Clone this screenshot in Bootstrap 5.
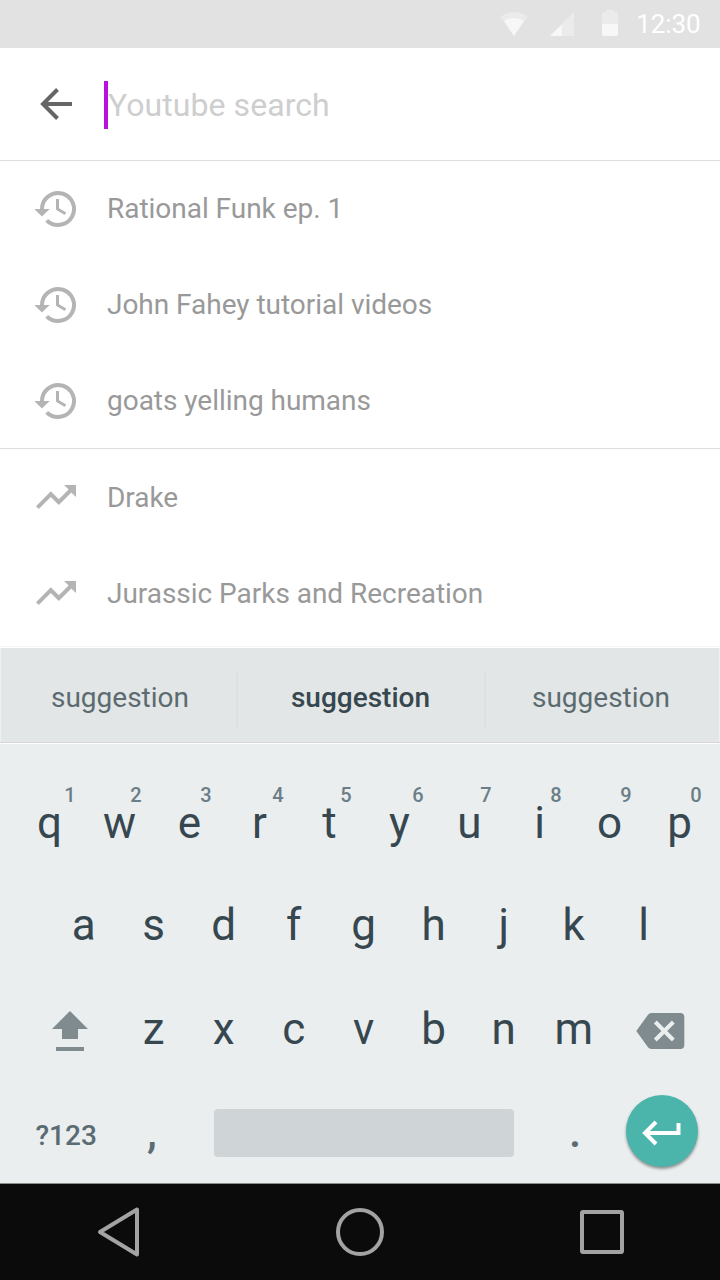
<!DOCTYPE html>
<html lang="en">
<head>
<meta charset="utf-8">
<meta name="viewport" content="width=device-width, initial-scale=1">
<title>Youtube search</title>
<link href="https://cdn.jsdelivr.net/npm/bootstrap@5.3.0/dist/css/bootstrap.min.css" rel="stylesheet">
<style>
body{font-family:Roboto,"Noto Sans",sans-serif;width:720px;height:1280px;overflow:hidden;background:#fff}
svg{display:block;flex:none}
.status{height:48px;background:#e2e2e2;color:#fff;font-size:26px;letter-spacing:-.1px;line-height:48px;padding-right:19.500px}
.search{height:113px;border-bottom:1px solid #dedede;padding-left:32px}
.caret{width:4px;height:48px;background:#b90fe0;margin-left:24px;margin-top:2px}
.query{border:0;outline:0;padding:0;width:500px;height:48px;font-size:32px;letter-spacing:.06px;background:none;margin-top:1px}
.query::placeholder{color:#cecece;opacity:1}
.hit{height:96px;flex:none;padding:0 0 0 32px;font-size:28px;letter-spacing:-.03px;color:#999;border:0;gap:27px;background:none}
.hit svg{fill:#b4b4b4}
.hits{height:288px;border-bottom:1px solid #dedede}
.hits.trend{height:197px;border:0}
.trend .hit{padding-top:2px}
.trend .hit svg{margin-top:-2px}
.bar{height:98px;border-top:1px solid #f4f4f4;background:#e2e6e6;border-bottom:1px solid #fdfdfd;font-size:28px;color:#5c6b70;box-shadow:inset 0 1px #fff,inset 0 -1px #d6d6d8,inset 1px 0 #eef0f0,inset -1px 0 #eef0f0}
.rule{width:2px;height:55px;background:#dce0e1;margin-top:8px}
.mid{color:#37474f;font-weight:500}
.bar span{margin-top:5px}
.keys{height:439px;background:#eaeeef;color:#37474f;font-size:44px;line-height:52px;padding-top:53px}
.keyrow{height:103px}
.key{width:70px;text-align:center;position:relative;height:52px}
.key sup{position:absolute;left:calc(50% + 6.500px);width:20px;top:-12px;font-size:20px;line-height:20px;font-weight:500;color:#6b7e87;text-align:center}
.key sup.far{left:calc(50% + 8.500px)}
.key sup.one{left:calc(50% + 10.500px)}
.dim{color:#5b6b72}
.space{width:300px;height:48px;border-radius:4px;background:#cfd4d6;margin-top:3px}
.enter{width:72px;height:72px;background:#4bb5ab;box-shadow:0 2px 3px rgba(0,0,0,.4);margin-top:-11px}
.sysnav{height:97px;background:#0b0b0b;border-top:1px solid #869087}
</style>
</head>
<body>
<header class="status d-flex align-items-center justify-content-end">
<svg width="140" height="48" viewBox="0 0 140 48"><path fill="#ebebeb" d="M4.500 16.500Q18 7.500 31.500 16.500L18 36Z"/><path fill="#f7f7f7" d="M8 21Q18 15 28 21L18 36Z"/><path fill="#ebebeb" d="M54 36L78 12V36Z"/><path fill="#f7f7f7" d="M54 36L66 24.500V36Z"/><path fill="#ebebeb" d="M110 10h8v2h2q2 0 2 2v10h-16V14q0-2 2-2h2Z"/><path fill="#f7f7f7" d="M106 24h16v10q0 2-2 2h-12q-2 0-2-2Z"/></svg>
<span>12:30</span>
</header>
<div class="search d-flex align-items-center">
<svg width="48" height="48" viewBox="0 0 48 48" fill="none" stroke="#666" stroke-width="4"><path d="M40 24H12M25.500 9.500L11 24 25.500 38.500"/></svg>
<div class="caret"></div><input class="query" placeholder="Youtube search" aria-label="Youtube search">
</div>
<svg class="d-none"><symbol id="history" viewBox="0 0 48 48"><g fill="none" stroke="#b4b4b4" stroke-width="4"><path d="M10 25V24A16 16 0 1 1 14.700 35.300"/><path stroke-width="3" d="M25.500 14V24L33.500 28.700"/></g><path d="M2.300 24h15.400L10 31.500Z"/></symbol>
<symbol id="trending" viewBox="0 0 48 48"><path d="M32 12l4.600 4.600-9.800 9.700-8-8L4 33.200 6.800 36l12-12 8 8 12.600-12.600L44 24V12Z"/></symbol></svg>
<div class="hits list-group list-group-flush rounded-0">
<a class="hit list-group-item d-flex align-items-center"><svg width="48" height="48"><use href="#history"/></svg>Rational Funk ep. 1</a>
<a class="hit list-group-item d-flex align-items-center"><svg width="48" height="48"><use href="#history"/></svg>John Fahey tutorial videos</a>
<a class="hit list-group-item d-flex align-items-center"><svg width="48" height="48"><use href="#history"/></svg>goats yelling humans</a>
</div>
<div class="hits trend list-group list-group-flush rounded-0">
<a class="hit list-group-item d-flex align-items-center"><svg width="48" height="48"><use href="#trending"/></svg>Drake</a>
<a class="hit list-group-item d-flex align-items-center"><svg width="48" height="48"><use href="#trending"/></svg>Jurassic Parks and Recreation</a>
</div>
<div class="bar d-flex align-items-center">
<span class="text-center" style="width:236px;padding-left:4px">suggestion</span><div class="rule"></div><span class="mid text-center" style="width:246px;padding-right:1px">suggestion</span><div class="rule"></div><span class="text-center" style="width:230px">suggestion</span>
</div>
<main class="keys">
<div class="keyrow d-flex" style="padding-left:14.500px">
<div class="key">q<sup class="one">1</sup></div><div class="key">w<sup>2</sup></div><div class="key">e<sup>3</sup></div><div class="key">r<sup class="far">4</sup></div><div class="key">t<sup>5</sup></div><div class="key">y<sup class="far">6</sup></div><div class="key">u<sup>7</sup></div><div class="key">i<sup>8</sup></div><div class="key">o<sup>9</sup></div><div class="key">p<sup>0</sup></div>
</div>
<div class="keyrow d-flex" style="padding-left:48.700px;margin-top:-1px;height:104px">
<div class="key">a</div><div class="key">s</div><div class="key">d</div><div class="key">f</div><div class="key">g</div><div class="key">h</div><div class="key">j</div><div class="key">k</div><div class="key">l</div>
</div>
<div class="keyrow d-flex">
<svg width="118.700" height="52" viewBox="0 0 118.700 52" fill="#7f8b8f"><path d="M70 8L88 26H78V36H62V26H52Z"/><path d="M56 44h28v4H56z"/></svg>
<div class="key">z</div><div class="key">x</div><div class="key">c</div><div class="key">v</div><div class="key">b</div><div class="key">n</div><div class="key">m</div>
<svg width="111" height="52" viewBox="0 0 111 52"><path fill="#7f8b8f" d="M42.300 10H71.300q4 0 4 4V42q0 4-4 4H42.300q-2 0-3.500-2L27.300 28 38.800 12q1.500-2 3.500-2Z"/><path stroke="#eaeeef" stroke-width="4" d="M46.300 19L64.300 37M64.300 19L46.300 37"/></svg>
</div>
<div class="d-flex">
<span class="dim" style="width:134px;padding-left:35.500px;padding-top:4px;font-size:28px;font-weight:500">?123</span><span class="dim" style="width:80px;padding-left:13px;font-weight:500">,</span><div class="space"></div><span class="dim text-center" style="width:112px;padding-left:10px;font-weight:500">.</span>
<div class="enter rounded-circle"><svg width="72" height="72" viewBox="0 0 72 72" fill="none" stroke="#fff" stroke-width="4"><path d="M52.500 28V38H20M30 27L19 38 30 49"/></svg></div>
</div>
</main>
<nav class="sysnav"><svg width="720" height="96" viewBox="0 0 720 96" fill="none" stroke="#a3a3a3" stroke-width="4" stroke-linejoin="round"><path d="M137 25.500V70.500L100 48Z"/><circle cx="360" cy="48" r="22"/><rect x="582" y="28" width="40" height="40" rx="1"/></svg></nav>
<script src="https://cdn.jsdelivr.net/npm/bootstrap@5.3.0/dist/js/bootstrap.bundle.min.js"></script>
</body>
</html>
